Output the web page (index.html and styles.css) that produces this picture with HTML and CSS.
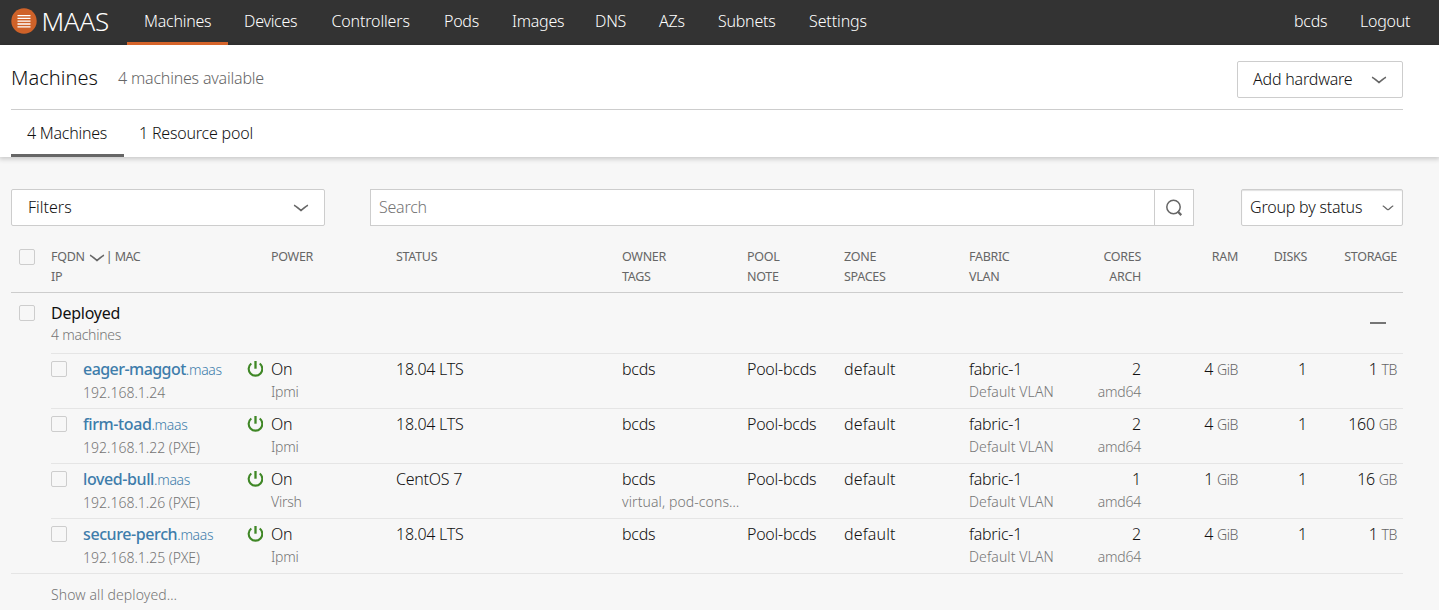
FILE: index.html
```html
<!DOCTYPE html>
<html lang="en">
<head>
<meta charset="utf-8">
<title>Machines | MAAS</title>
<link rel="stylesheet" href="styles.css">
</head>
<body>
<svg class="symbols" width="0" height="0">
  <symbol id="chevron" viewBox="0 0 16 16"><path d="M1 5.2C3 5.7 5.6 9 8 10.4C10.4 9 13 5.7 15 5.2" fill="none" stroke="currentColor" stroke-width="1.7"/></symbol>
  <symbol id="power" viewBox="0 0 16 16"><path d="M4.3 2.5A6.8 6.8 0 1 0 12.7 2.5" fill="none" stroke="currentColor" stroke-width="2.1"/><path d="M8.5 0v7.7" stroke="currentColor" stroke-width="2.3"/></symbol>
</svg>
<header class="navbar">
  <a class="logo">
    <svg width="26" height="26" viewBox="0 0 26 26"><circle cx="13" cy="13" r="12.7" fill="#cf6229"/><path d="M6.5 7.6h13M6.5 10.4h13M6.5 13.2h13M6.5 16h13M6.5 18.8h13" stroke="#fff" stroke-width="1.3"/></svg>
    <span class="logo-text">MAAS</span>
  </a>
  <nav class="nav">
    <a class="nav-item active">Machines</a><a class="nav-item">Devices</a><a class="nav-item controllers">Controllers</a><a class="nav-item pods">Pods</a><a class="nav-item images">Images</a><a class="nav-item dns">DNS</a><a class="nav-item azs">AZs</a><a class="nav-item subnets">Subnets</a><a class="nav-item settings">Settings</a>
  </nav>
  <nav class="nav user"><a class="nav-item name">bcds</a><a class="nav-item logout">Logout</a></nav>
</header>
<section class="page-head">
  <div class="title-row">
    <h1 class="title">Machines</h1><span class="subtitle">4 machines available</span>
    <button class="btn add"><span>Add hardware</span><svg class="icon"><use href="#chevron"/></svg></button>
  </div>
  <nav class="tabs"><a class="tab selected">4 Machines</a><a class="tab pool-tab">1 Resource pool</a></nav>
</section>
<main class="content">
  <div class="toolbar">
    <button class="btn filters"><span>Filters</span><svg class="icon"><use href="#chevron"/></svg></button>
    <div class="search"><span class="search-input">Search</span><span class="search-btn"><svg width="18" height="18" viewBox="0 0 18 18" fill="none" stroke="#666"><circle cx="8.5" cy="8" r="6.7" stroke-width="1.5"/><path d="M12.6 12.4l3.7 3.7" stroke-width="2.2"/></svg></span></div>
    <div class="select"><span>Group by status</span><svg class="icon small"><use href="#chevron"/></svg></div>
  </div>
  <div class="table">
    <div class="row head">
      <i class="check"></i>
      <div><p>FQDN <svg class="icon sort"><use href="#chevron"/></svg><span class="mac">| MAC</span></p><p>IP</p></div>
      <div class="inset">POWER</div><div>STATUS</div><div><p>OWNER</p><p>TAGS</p></div><div><p>POOL</p><p>NOTE</p></div><div><p>ZONE</p><p>SPACES</p></div><div><p>FABRIC</p><p>VLAN</p></div>
      <div class="num"><p>CORES</p><p>ARCH</p></div><div class="num">RAM</div><div class="num">DISKS</div><div class="num">STORAGE</div>
    </div>
    <div class="group">
      <i class="check"></i>
      <div class="group-name"><p class="deployed">Deployed</p><p class="sub count">4 machines</p></div>
      <i class="collapse"></i>
    </div>
    <div class="row machine">
      <span></span>
      <div class="fqdn"><i class="check"></i><div><p><a class="link"><b class="long">eager-maggot</b>.maas</a></p><p class="sub ip">192.168.1.24</p></div></div>
      <div class="power"><svg class="icon on"><use href="#power"/></svg><div><p>On</p><p class="sub driver">Ipmi</p></div></div>
      <div class="os">18.04 LTS</div><div>bcds</div><div class="pool">Pool-bcds</div><div class="zone">default</div><div><p>fabric-1</p><p class="sub vlan">Default VLAN</p></div>
      <div class="num"><p>2</p><p class="sub arch">amd64</p></div><div class="num">4 <small>GiB</small></div><div class="num">1</div><div class="num">1 <small>TB</small></div>
    </div>
    <div class="row machine">
      <span></span>
      <div class="fqdn"><i class="check"></i><div><p><a class="link"><b>firm-toad</b>.maas</a></p><p class="sub ip">192.168.1.22 (PXE)</p></div></div>
      <div class="power"><svg class="icon on"><use href="#power"/></svg><div><p>On</p><p class="sub driver">Ipmi</p></div></div>
      <div class="os">18.04 LTS</div><div>bcds</div><div class="pool">Pool-bcds</div><div class="zone">default</div><div><p>fabric-1</p><p class="sub vlan">Default VLAN</p></div>
      <div class="num"><p>2</p><p class="sub arch">amd64</p></div><div class="num">4 <small>GiB</small></div><div class="num">1</div><div class="num">160 <small>GB</small></div>
    </div>
    <div class="row machine">
      <span></span>
      <div class="fqdn"><i class="check"></i><div><p><a class="link"><b>loved-bull</b>.maas</a></p><p class="sub ip">192.168.1.26 (PXE)</p></div></div>
      <div class="power"><svg class="icon on"><use href="#power"/></svg><div><p>On</p><p class="sub driver">Virsh</p></div></div>
      <div class="os">CentOS 7</div><div><p>bcds</p><p class="sub tags">virtual, pod-cons…</p></div><div class="pool">Pool-bcds</div><div class="zone">default</div><div><p>fabric-1</p><p class="sub vlan">Default VLAN</p></div>
      <div class="num"><p>1</p><p class="sub arch">amd64</p></div><div class="num">1 <small>GiB</small></div><div class="num">1</div><div class="num">16 <small>GB</small></div>
    </div>
    <div class="row machine">
      <span></span>
      <div class="fqdn"><i class="check"></i><div><p><a class="link"><b>secure-perch</b>.maas</a></p><p class="sub ip">192.168.1.25 (PXE)</p></div></div>
      <div class="power"><svg class="icon on"><use href="#power"/></svg><div><p>On</p><p class="sub driver">Ipmi</p></div></div>
      <div class="os">18.04 LTS</div><div>bcds</div><div class="pool">Pool-bcds</div><div class="zone">default</div><div><p>fabric-1</p><p class="sub vlan">Default VLAN</p></div>
      <div class="num"><p>2</p><p class="sub arch">amd64</p></div><div class="num">4 <small>GiB</small></div><div class="num">1</div><div class="num">1 <small>TB</small></div>
    </div>
    <div class="show-all sub">Show all deployed…</div>
  </div>
</main>
</body>
</html>
```
FILE: styles.css
```css
* { box-sizing: border-box; }
body { margin: 0; height: 610px; overflow: hidden; background: #f7f7f7; color: #111; font: 300 16px/24px "Noto Sans", "Open Sans", sans-serif; letter-spacing: -0.25px; white-space: nowrap; }
p, h1 { margin: 0; }
.symbols { display: none; }
.icon { width: 16px; height: 16px; flex: none; color: #666; }
.navbar { display: flex; height: 45px; background: #333; color: #fff; padding-left: 10.5px; }
.logo { display: flex; width: 116.5px; height: 42px; align-items: center; gap: 5px; flex: none; }
.logo-text { font-size: 26px; letter-spacing: -0.3px; line-height: 40px; padding-bottom: 1px; }
.nav { display: flex; }
.nav-item { height: 45px; padding: 9px 0 0 17px; width: 100px; }
.nav-item.active { width: 101px; border-bottom: 3px solid #d6642a; }
.nav-item:nth-child(2) { width: 87px; padding-left: 16px; }
.nav-item.controllers { width: 112px; padding-left: 16.5px; letter-spacing: -0.15px; }
.nav-item.pods { width: 68px; }
.nav-item.images { width: 83px; }
.nav-item.dns { width: 64px; }
.nav-item.azs { width: 60px; }
.nav-item.subnets { width: 91px; padding-left: 16px; }
.nav-item.settings { padding-left: 16px; letter-spacing: -0.1px; }
.user { margin-left: auto; }
.user .nav-item { padding-left: 0; }
.user .name { width: 66px; }
.user .nav-item.logout { width: 79px; padding-left: 0; }
.page-head { height: 112px; padding: 0 36px 0 11px; background: #fff; box-shadow: 0 1px 5px 1px rgba(0,0,0,.2); }
.title-row { display: flex; height: 65px; border-bottom: 1px solid #cdcdcd; }
.title { width: 107px; font: inherit; font-size: 20px; line-height: 65px; letter-spacing: 0.05px; }
.subtitle { color: #666; line-height: 66px; letter-spacing: -0.2px; }
.btn { display: flex; align-items: center; justify-content: space-between; height: 37px; padding: 0 15px 0 16px; border: 1px solid #cdcdcd; border-radius: 2px; background: #fff; color: #111; font: inherit; letter-spacing: inherit; }
.btn span { padding-bottom: 2px; }
.add { width: 166px; margin: 16px 0 0 auto; padding-left: 15px; letter-spacing: -0.2px; }
.tabs { display: flex; height: 47px; }
.tab { width: 113px; padding: 11px 0 0 16px; }
.selected { border-bottom: 3px solid #666; }
.pool-tab { width: 150px; padding-left: 15px; letter-spacing: -0.2px; }
.content { padding: 32px 36px 0 11px; }
.toolbar { display: flex; height: 37px; }
.filters { width: 314px; margin-right: 45px; letter-spacing: 0; }
.search { display: flex; width: 824px; border: 1px solid #cdcdcd; background: #fff; margin-right: 47px; line-height: 34px; }
.search-input { flex: 1; padding-left: 8px; color: #757575; }
.search-btn { width: 39px; border-left: 1px solid #cdcdcd; display: flex; align-items: center; justify-content: center; }
.select { display: flex; align-items: center; justify-content: space-between; width: 162px; padding: 0 8px; border: 1px solid #cdcdcd; border-radius: 2px; background: #fff; box-shadow: inset 0 1px 1px rgba(0,0,0,.12); letter-spacing: -0.2px; }
.select span { padding-bottom: 2px; }
.small { width: 12px; height: 12px; }
.row { display: grid; grid-template-columns: 40px 196px 149px 226px 125px 97px 125px 91px 81px 97px 69px 90px; }
.head { height: 67px; padding-top: 21px; border-bottom: 1px solid #cdcdcd; color: #666; font-size: 12.5px; font-weight: 400; line-height: 20px; letter-spacing: -0.3px; }
.inset { padding-left: 24px; }
.check { display: block; width: 16px; height: 16px; margin: 2px 0 0 8px; border: 1px solid #cdcdcd; border-radius: 2px; flex: none; }
.sort { vertical-align: -5px; margin: 0 1px; }
.mac { letter-spacing: -0.5px; }
.num { text-align: right; }
.group { display: flex; height: 60px; padding-top: 8px; }
.group > .check { margin-top: 4px; }
.group-name { padding-left: 16px; }
.deployed { font-weight: 400; }
.sub { color: #757575; font-size: 14px; line-height: 20px; letter-spacing: 0.1px; }
.count, .driver, .arch { letter-spacing: -0.25px; }
.collapse { width: 16px; height: 2px; margin: 21px 17px 0 auto; background: #757575; }
.machine { height: 55px; padding-top: 4px; background: linear-gradient(#e5e5e5,#e5e5e5) 40px 0 / 100% 1px no-repeat; }
.machine .sub { line-height: 22px; }
.machine .ip { letter-spacing: 0; }
.zone { letter-spacing: 0.15px; }
.fqdn, .power { display: flex; }
.fqdn .check { margin: 4px 16px 0 0; }
.link { color: #3e7dab; font-size: 14px; letter-spacing: -0.3px; }
.link b { font-size: 16px; font-weight: 500; letter-spacing: -0.4px; }
.link .long { letter-spacing: -0.55px; }
.power { gap: 8px; }
.on { margin-top: 4px; color: #3f8726; }
small { color: #666; font-size: 14px; letter-spacing: -0.4px; }
.show-all { height: 36px; border-top: 1px solid #e5e5e5; padding: 11px 0 0 40px; }
```
